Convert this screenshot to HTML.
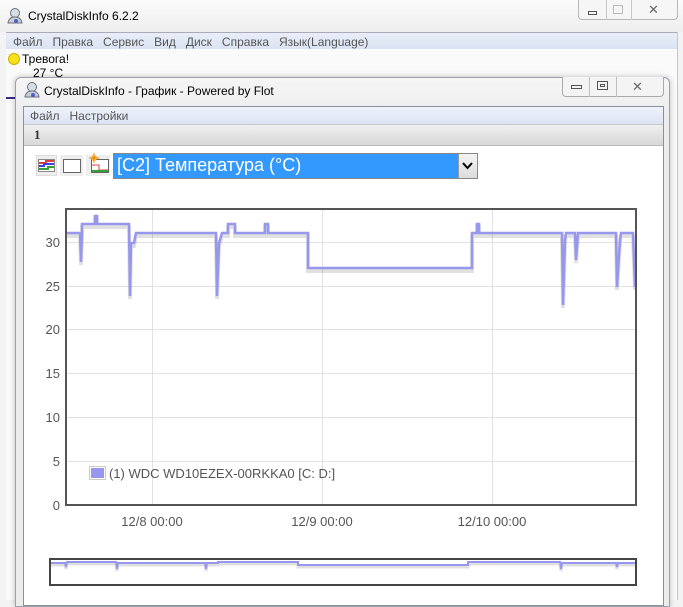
<!DOCTYPE html>
<html><head><meta charset="utf-8"><style>
*{margin:0;padding:0;box-sizing:border-box}
body{width:683px;height:600px;overflow:hidden;background:#f3f3f3;font-family:"Liberation Sans",sans-serif;position:relative}
.abs{position:absolute}
.t{font-size:12px;color:#000;white-space:nowrap}
</style></head><body>
<!-- outer window -->
<div class="abs" style="left:0;top:0;width:683px;height:32px;background:linear-gradient(#fbfbfb,#eeeeee)"></div>
<svg class="abs" style="left:6px;top:7px" width="18" height="18" viewBox="0 0 18 18"><circle cx="9" cy="6" r="4.5" fill="#d8dce4" stroke="#6b7280"/><path d="M2 16 Q3 10 9 10 Q15 10 16 16Z" fill="#c9ced8" stroke="#6b7280"/><circle cx="10" cy="14" r="2" fill="#5060c0"/></svg>
<div class="abs t" style="left:28px;top:9px;font-size:12px">CrystalDiskInfo 6.2.2</div>
<div class="abs" style="left:578px;top:0;width:100px;height:20px;border:1px solid #b8b8b8;border-top:none;border-radius:0 0 4px 4px;background:#f6f6f6"></div>
<div class="abs" style="left:606px;top:0;width:1px;height:20px;background:#c8c8c8"></div>
<div class="abs" style="left:631px;top:0;width:1px;height:20px;background:#c8c8c8"></div>
<div class="abs" style="left:588px;top:11px;width:9px;height:4px;border:1px solid #555"></div>
<div class="abs" style="left:613px;top:5px;width:10px;height:9px;border:1px solid #bbb"></div>
<div class="abs t" style="left:648px;top:2px;color:#666;font-size:13px">✕</div>
<div class="abs" style="left:6px;top:32px;width:672px;height:17px;background:linear-gradient(#e9eef8,#dbe3f3);border-top:1px solid #aab"></div>
<div class="abs t" style="left:13px;top:35px;color:#555">Файл&nbsp;&nbsp;&nbsp;Правка&nbsp;&nbsp;&nbsp;Сервис&nbsp;&nbsp;&nbsp;Вид&nbsp;&nbsp;&nbsp;Диск&nbsp;&nbsp;&nbsp;Справка&nbsp;&nbsp;&nbsp;Язык(Language)</div>
<div class="abs" style="left:6px;top:49px;width:672px;height:551px;background:#fafafa"></div>
<div class="abs" style="left:8px;top:53px;width:12px;height:12px;border-radius:50%;background:#f5e21a;border:1px solid #d0b000"></div>
<div class="abs t" style="left:22px;top:52px">Тревога!</div>
<div class="abs t" style="left:33px;top:66px">27 °C</div>
<div class="abs" style="left:6px;top:97px;width:12px;height:2px;background:#3a2a8a"></div>
<div class="abs" style="left:677px;top:32px;width:1px;height:568px;background:#c8c8c8"></div>
<!-- inner window -->
<div class="abs" style="left:15px;top:77px;width:655px;height:530px;border:1px solid #9aa2ae;border-radius:6px 6px 0 0;background:linear-gradient(#f6f6f6,#ececec 40px);box-shadow:0 0 6px rgba(0,0,0,.25)"></div>
<svg class="abs" style="left:23px;top:81px" width="18" height="18" viewBox="0 0 18 18"><circle cx="9" cy="6" r="4.5" fill="#d8dce4" stroke="#6b7280"/><path d="M2 16 Q3 10 9 10 Q15 10 16 16Z" fill="#c9ced8" stroke="#6b7280"/><circle cx="10" cy="14" r="2" fill="#5060c0"/></svg>
<div class="abs t" style="left:44px;top:84px">CrystalDiskInfo - График - Powered by Flot</div>
<div class="abs" style="left:562px;top:77px;width:102px;height:20px;border:1px solid #aaa;border-top:none;border-radius:0 0 4px 4px;background:#f4f4f4"></div>
<div class="abs" style="left:589px;top:77px;width:1px;height:20px;background:#c0c0c0"></div>
<div class="abs" style="left:616px;top:77px;width:1px;height:20px;background:#c0c0c0"></div>
<div class="abs" style="left:571px;top:85px;width:11px;height:4px;border:1px solid #555"></div>
<div class="abs" style="left:597px;top:81px;width:11px;height:9px;border:1px solid #555"></div>
<div class="abs" style="left:600px;top:84px;width:5px;height:3px;border:1px solid #555"></div>
<div class="abs t" style="left:632px;top:79px;color:#666;font-size:13px">✕</div>
<div class="abs" style="left:23px;top:106px;width:641px;height:500px;border:1px solid #8a8f98;background:#fff"></div>
<div class="abs" style="left:24px;top:107px;width:639px;height:17px;background:linear-gradient(#eef2fb,#dce4f4)"></div>
<div class="abs t" style="left:30px;top:109px;color:#555">Файл&nbsp;&nbsp;&nbsp;Настройки</div>
<div class="abs" style="left:24px;top:124px;width:639px;height:22px;background:linear-gradient(#f0f0f0,#d8d8d8);border-top:1px solid #c8c8c8;border-bottom:1px solid #bbb"></div>
<div class="abs t" style="left:34px;top:127px;font-weight:bold;font-family:'Liberation Serif',serif;font-size:13px;color:#333">1</div>
<!-- toolbar -->
<div class="abs" style="left:36px;top:155px;width:21px;height:21px;background:#eee;border:1px solid #ddd"></div>
<svg class="abs" style="left:38px;top:159px" width="17" height="13"><rect x="0.5" y="0.5" width="16" height="12" fill="#fff" stroke="#888"/><path d="M1 4 H8 V2 H16" stroke="#e04040" stroke-width="2" fill="none"/><path d="M1 7 H6 V5 H16" stroke="#4040e0" stroke-width="2" fill="none"/><path d="M1 10 H10 V8 H16" stroke="#30a030" stroke-width="2" fill="none"/></svg>
<div class="abs" style="left:60px;top:155px;width:23px;height:21px;background:#eee"></div>
<div class="abs" style="left:63px;top:159px;width:18px;height:14px;background:#fff;border:1px solid #666"></div>
<div class="abs" style="left:86px;top:155px;width:24px;height:21px;background:#eee"></div>
<svg class="abs" style="left:88px;top:153px" width="22" height="22"><rect x="3.5" y="6.5" width="17" height="13" fill="#fff" stroke="#666"/><path d="M4 12 H11 V17 H20" stroke="#e04040" fill="none"/><path d="M4 18 H20" stroke="#30a030" stroke-width="2"/><circle cx="6" cy="5" r="3" fill="#f0c020"/><path d="M6 0 V10 M1 5 H11" stroke="#f08020"/></svg>
<div class="abs" style="left:113px;top:153px;width:365px;height:26px;border:1px solid #888;background:#fff"></div>
<div class="abs" style="left:114px;top:154px;width:344px;height:24px;background:#3399ff"></div>
<div class="abs t" style="left:117px;top:155px;color:#fff;font-size:18px">[C2] Температура (°C)</div>
<div class="abs" style="left:458px;top:154px;width:19px;height:24px;background:linear-gradient(#f4f4f4,#dcdcdc);border-left:1px solid #999"></div>
<svg class="abs" style="left:461px;top:161px" width="13" height="10"><path d="M2 2 L6.5 7 L11 2" stroke="#000" stroke-width="2" fill="none"/></svg>
<!-- chart -->
<svg class="abs" style="left:0;top:0" width="683" height="600">
<g stroke="#e2e2e2" stroke-width="1">
<line x1="67" y1="242.5" x2="635" y2="242.5"/><line x1="67" y1="286.5" x2="635" y2="286.5"/><line x1="67" y1="329.5" x2="635" y2="329.5"/><line x1="67" y1="373.5" x2="635" y2="373.5"/><line x1="67" y1="417.5" x2="635" y2="417.5"/><line x1="67" y1="461.5" x2="635" y2="461.5"/>
<line x1="152.5" y1="210" x2="152.5" y2="505"/><line x1="322.5" y1="210" x2="322.5" y2="505"/><line x1="492.5" y1="210" x2="492.5" y2="505"/>
</g>
<path d="M66 233 H80 L81 262 L82 233 V224 H95 V216 H97 V224 H129 L130 296 L131 243 L134 243 L136 233 H216 L217 296 L219 243 L222 233 H228 V224 H235 V233 H265 V224 H268 V233 H308 V268 H472 V233 H477 V224 H479 V233 H562 L563 305 L565 240 L566 233 H575 L576 260 L578 233 H616 L617 287 L620 240 L621 233 H633 L635 287" fill="none" stroke="#000" stroke-opacity=".12" stroke-width="4" transform="translate(0,3)"/>
<path d="M66 233 H80 L81 262 L82 233 V224 H95 V216 H97 V224 H129 L130 296 L131 243 L134 243 L136 233 H216 L217 296 L219 243 L222 233 H228 V224 H235 V233 H265 V224 H268 V233 H308 V268 H472 V233 H477 V224 H479 V233 H562 L563 305 L565 240 L566 233 H575 L576 260 L578 233 H616 L617 287 L620 240 L621 233 H633 L635 287" fill="none" stroke="#9797ee" stroke-width="2.5"/>
<rect x="66" y="209" width="570" height="296" fill="none" stroke="#555" stroke-width="2"/>
<g font-family="Liberation Sans, sans-serif" font-size="13" fill="#555" text-anchor="end">
<text x="60" y="247">30</text><text x="60" y="291">25</text><text x="60" y="334">20</text><text x="60" y="378">15</text><text x="60" y="422">10</text><text x="60" y="466">5</text><text x="60" y="510">0</text>
</g>
<g font-family="Liberation Sans, sans-serif" font-size="13" fill="#555" text-anchor="middle">
<text x="152" y="526">12/8 00:00</text><text x="322" y="526">12/9 00:00</text><text x="492" y="526">12/10 00:00</text>
</g>
<rect x="89.5" y="466.5" width="16" height="13" fill="#fff" stroke="#ccc"/><rect x="91" y="468" width="13" height="10" fill="#9797ee"/>
<text x="109" y="478" font-family="Liberation Sans, sans-serif" font-size="13" fill="#555">(1) WDC WD10EZEX-00RKKA0 [C: D:]</text>
<path d="M51 563 H65 L66 567 L67 562 H116 L117 569 L118 563 H205 L206 569 L207 563 H218 V562 H298 V565 H468 V562 H560 L561 569 L562 563 H616 L617 567 L618 563 H635" fill="none" stroke="#000" stroke-opacity=".12" stroke-width="3" transform="translate(0,2)"/>
<path d="M51 563 H65 L66 567 L67 562 H116 L117 569 L118 563 H205 L206 569 L207 563 H218 V562 H298 V565 H468 V562 H560 L561 569 L562 563 H616 L617 567 L618 563 H635" fill="none" stroke="#9797ee" stroke-width="2"/>
<rect x="50" y="559" width="586" height="26" fill="none" stroke="#444" stroke-width="2"/>
</svg>
</body></html>
